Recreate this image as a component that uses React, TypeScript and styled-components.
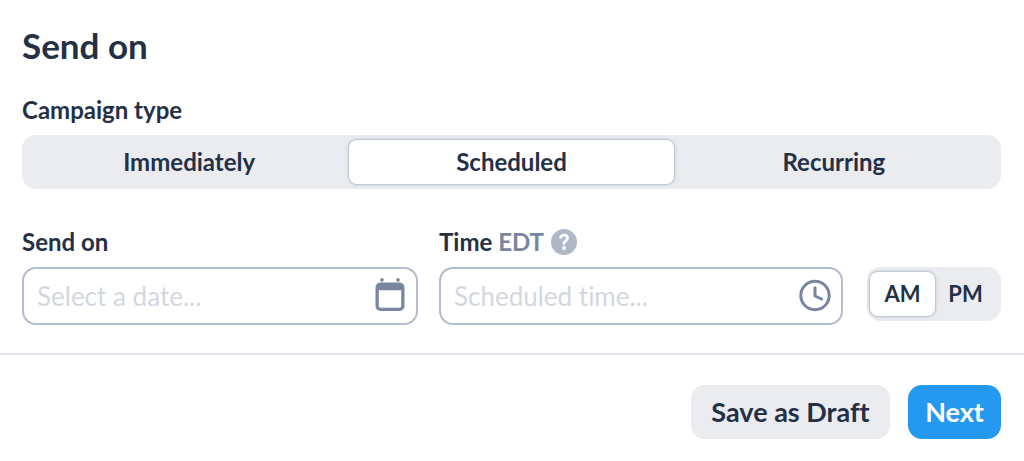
import React, { useState } from "react";
import styled, { createGlobalStyle } from "styled-components";

const ink = "#233046";
const slate = "#7886a0";
const line = "#b3bbcd";
const mist = "#ebecf0";

const GlobalStyle = createGlobalStyle`
  *, *::before, *::after { box-sizing: border-box; }
  body {
    margin: 0;
    background: #fff;
    color: ${ink};
    font-family: Lato, "Liberation Sans", sans-serif;
    font-size: 24px;
    line-height: 32px;
    font-variant-ligatures: none;
  }
  button, input { font: inherit; font-variant-ligatures: none; color: inherit; }
`;

const Form = styled.form`
  display: flex;
  flex-direction: column;
`;

const Body = styled.div`
  padding: 25px 23px 28px 22px;
`;

const Title = styled.h1`
  margin: 0 0 29px;
  font-size: 35px;
  line-height: 40px;
  font-weight: 700;
`;

const Caption = styled.div`
  display: flex;
  align-items: center;
  gap: 7px;
  height: 32px;
  margin-bottom: 9px;
  font-weight: 700;
`;

const Zone = styled.span`
  color: ${slate};
`;

const Segments = styled.div<{ $compact?: boolean }>`
  display: grid;
  grid-auto-flow: column;
  grid-auto-columns: 1fr;
  height: 54px;
  padding: ${(p) => (p.$compact ? "5px 4px" : "5px 6px")};
  border-radius: 14px;
  font-size: ${(p) => (p.$compact ? "22px" : "24px")};
  background: ${mist};
`;

const Segment = styled.label<{ $active: boolean }>`
  display: flex;
  align-items: center;
  justify-content: center;
  margin: ${(p) => (p.$active ? "0 -1px" : "0")};
  border-radius: 8px;
  font-weight: 700;
  cursor: pointer;
  background: ${(p) => (p.$active ? "#fff" : "transparent")};
  box-shadow: ${(p) => (p.$active ? "0 0 0 1px #bfc8d6, 0 0 4px #b0bbcd" : "none")};
`;

const HiddenRadio = styled.input`
  appearance: none;
  width: 0;
  height: 0;
  margin: 0;
`;

const Fields = styled.div`
  display: grid;
  grid-template-columns: 396fr 404fr 137px;
  column-gap: 21px;
  align-items: start;
  margin-top: 37px;
`;

const Meridiem = styled.div`
  padding: 41px 0 0 3px;
`;

const InputFrame = styled.div`
  display: flex;
  align-items: center;
  height: 58px;
  padding: 0 9px 0 13px;
  border: 2px solid ${line};
  border-radius: 14px;
`;

const TextInput = styled.input`
  flex: 1;
  min-width: 0;
  padding: 0;
  border: 0;
  outline: 0;
  background: transparent;
  font-size: 26px;
  &::placeholder { color: #d3d7e1; opacity: 1; }
`;

const IconButton = styled.button`
  display: flex;
  padding: 0;
  border: 0;
  background: transparent;
  color: ${slate};
  cursor: pointer;
`;

const Footer = styled.footer`
  display: flex;
  justify-content: flex-end;
  gap: 18px;
  padding: 30px 23px 22px;
  border-top: 2px solid #e1e4eb;
`;

const Button = styled.button<{ $primary?: boolean }>`
  height: 54px;
  min-width: ${(p) => (p.$primary ? "93px" : "199px")};
  padding: 0 17px;
  border: 0;
  border-radius: 14px;
  font-size: 27px;
  font-weight: 700;
  cursor: pointer;
  color: ${(p) => (p.$primary ? "#fff" : ink)};
  background: ${(p) => (p.$primary ? "#2599f0" : mist)};
`;

const CalendarIcon = () => (
  <svg width="34" height="36" viewBox="0 0 34 36" aria-hidden="true">
    <path
      fill="currentColor"
      fillRule="evenodd"
      d="M7.500 4.500h19a5 5 0 0 1 5 5v18.500a5 5 0 0 1-5 5H7.500a5 5 0 0 1-5-5V9.500a5 5 0 0 1 5-5ZM5.800 12.300V28q0 1.700 1.700 1.700h19q1.700 0 1.700-1.700V12.300Z"
    />
    <circle cx="9" cy="1.900" r="1.800" fill="currentColor" />
    <circle cx="25" cy="1.900" r="1.800" fill="currentColor" />
  </svg>
);

const ClockIcon = () => (
  <svg width="34" height="34" viewBox="0 0 34 34" fill="none" stroke="currentColor" strokeWidth="3" strokeLinecap="round" strokeLinejoin="round" aria-hidden="true">
    <circle cx="17" cy="16.500" r="14.200" />
    <path d="M17 8.800V17L23.500 20" />
  </svg>
);

const HelpIcon = () => (
  <svg width="26" height="26" viewBox="0 0 26 26" fill="none" aria-hidden="true">
    <circle cx="13" cy="13" r="13" fill="#b0b8c8" />
    <path d="M9.600 8.400C10.400 6.800 11.600 6.200 13.100 6.200C15.200 6.200 16.500 7.400 16.500 9.200C16.500 11.700 13 11.700 13 14.500" stroke="#fff" strokeWidth="2.800" strokeLinecap="round" />
    <circle cx="13" cy="19" r="2" fill="#fff" />
  </svg>
);

type PickerProps = {
  name: string;
  label: string;
  options: string[];
  initial: string;
  compact?: boolean;
};

function Picker({ name, label, options, initial, compact }: PickerProps) {
  const [value, setValue] = useState(initial);
  return (
    <Segments role="radiogroup" aria-label={label} $compact={compact}>
      {options.map((option) => (
        <Segment key={option} $active={option === value}>
          <HiddenRadio
            type="radio"
            name={name}
            value={option}
            checked={option === value}
            onChange={() => setValue(option)}
          />
          {option}
        </Segment>
      ))}
    </Segments>
  );
}

export default function App() {
  return (
    <>
      <GlobalStyle />
      <Form onSubmit={(e) => e.preventDefault()}>
        <Body>
          <Title>Send on</Title>
          <Caption>Campaign type</Caption>
          <Picker
            name="type"
            label="Campaign type"
            options={["Immediately", "Scheduled", "Recurring"]}
            initial="Scheduled"
          />
          <Fields>
            <div>
              <Caption>
                <label htmlFor="date">Send on</label>
              </Caption>
              <InputFrame>
                <TextInput id="date" placeholder="Select a date..." />
                <IconButton type="button" aria-label="Choose date">
                  <CalendarIcon />
                </IconButton>
              </InputFrame>
            </div>
            <div>
              <Caption>
                <label htmlFor="time">
                  Time <Zone>EDT</Zone>
                </label>
                <IconButton type="button" aria-label="Time zone help">
                  <HelpIcon />
                </IconButton>
              </Caption>
              <InputFrame>
                <TextInput id="time" placeholder="Scheduled time..." />
                <IconButton type="button" aria-label="Choose time">
                  <ClockIcon />
                </IconButton>
              </InputFrame>
            </div>
            <Meridiem>
              <Picker name="meridiem" label="AM or PM" options={["AM", "PM"]} initial="AM" compact />
            </Meridiem>
          </Fields>
        </Body>
        <Footer>
          <Button type="button">Save as Draft</Button>
          <Button type="submit" $primary>
            Next
          </Button>
        </Footer>
      </Form>
    </>
  );
}
